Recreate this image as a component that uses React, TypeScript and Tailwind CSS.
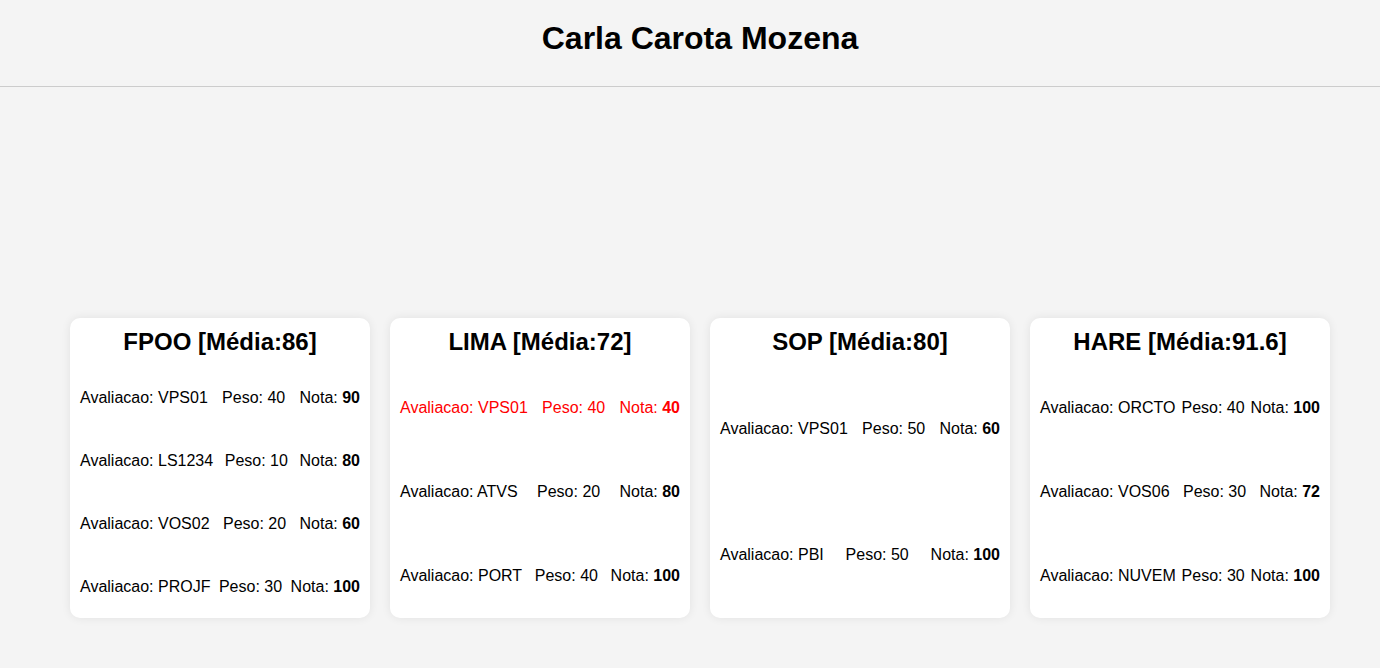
type Avaliacao = { nome: string; peso: number; nota: number }
type Materia = { sigla: string; media: string; avaliacoes: Avaliacao[] }

const materias: Materia[] = [
  {
    sigla: "FPOO",
    media: "86",
    avaliacoes: [
      { nome: "VPS01", peso: 40, nota: 90 },
      { nome: "LS1234", peso: 10, nota: 80 },
      { nome: "VOS02", peso: 20, nota: 60 },
      { nome: "PROJF", peso: 30, nota: 100 },
    ],
  },
  {
    sigla: "LIMA",
    media: "72",
    avaliacoes: [
      { nome: "VPS01", peso: 40, nota: 40 },
      { nome: "ATVS", peso: 20, nota: 80 },
      { nome: "PORT", peso: 40, nota: 100 },
    ],
  },
  {
    sigla: "SOP",
    media: "80",
    avaliacoes: [
      { nome: "VPS01", peso: 50, nota: 60 },
      { nome: "PBI", peso: 50, nota: 100 },
    ],
  },
  {
    sigla: "HARE",
    media: "91.6",
    avaliacoes: [
      { nome: "ORCTO", peso: 40, nota: 100 },
      { nome: "VOS06", peso: 30, nota: 72 },
      { nome: "NUVEM", peso: 30, nota: 100 },
    ],
  },
]

function Card({ materia }: { materia: Materia }) {
  return (
    <div className="flex h-[300px] w-[300px] flex-col rounded-[10px] bg-white shadow-[0_0_10px_rgba(0,0,0,0.08)]">
      <h2 className="flex h-12 items-center justify-center text-2xl font-bold text-black">
        {materia.sigla} [Média:{materia.media}]
      </h2>
      <div className="flex flex-1 flex-col justify-around">
        {materia.avaliacoes.map((a) => (
          <div
            key={a.nome}
            className={`flex justify-between px-[10px] text-base leading-[18px] ${
              a.nota < 50 ? "text-[#ff0000]" : "text-black"
            }`}
          >
            <span>Avaliacao: {a.nome}</span>
            <span>Peso: {a.peso}</span>
            <span>
              Nota: <b>{a.nota}</b>
            </span>
          </div>
        ))}
      </div>
    </div>
  )
}

export default function App() {
  return (
    <div className="flex min-h-[668px] flex-col bg-[#f4f4f4] font-['Liberation_Sans',Arial,sans-serif]">
      <header className="border-b border-[#cccccc] pt-5 pb-[29px] pl-5">
        <h1 className="text-center text-[32px] font-bold leading-[37px] text-black">Carla Carota Mozena</h1>
      </header>
      <main className="flex flex-1 items-end justify-center gap-5 pb-[50px] pl-5">
        {materias.map((m) => (
          <Card key={m.sigla} materia={m} />
        ))}
      </main>
    </div>
  )
}
